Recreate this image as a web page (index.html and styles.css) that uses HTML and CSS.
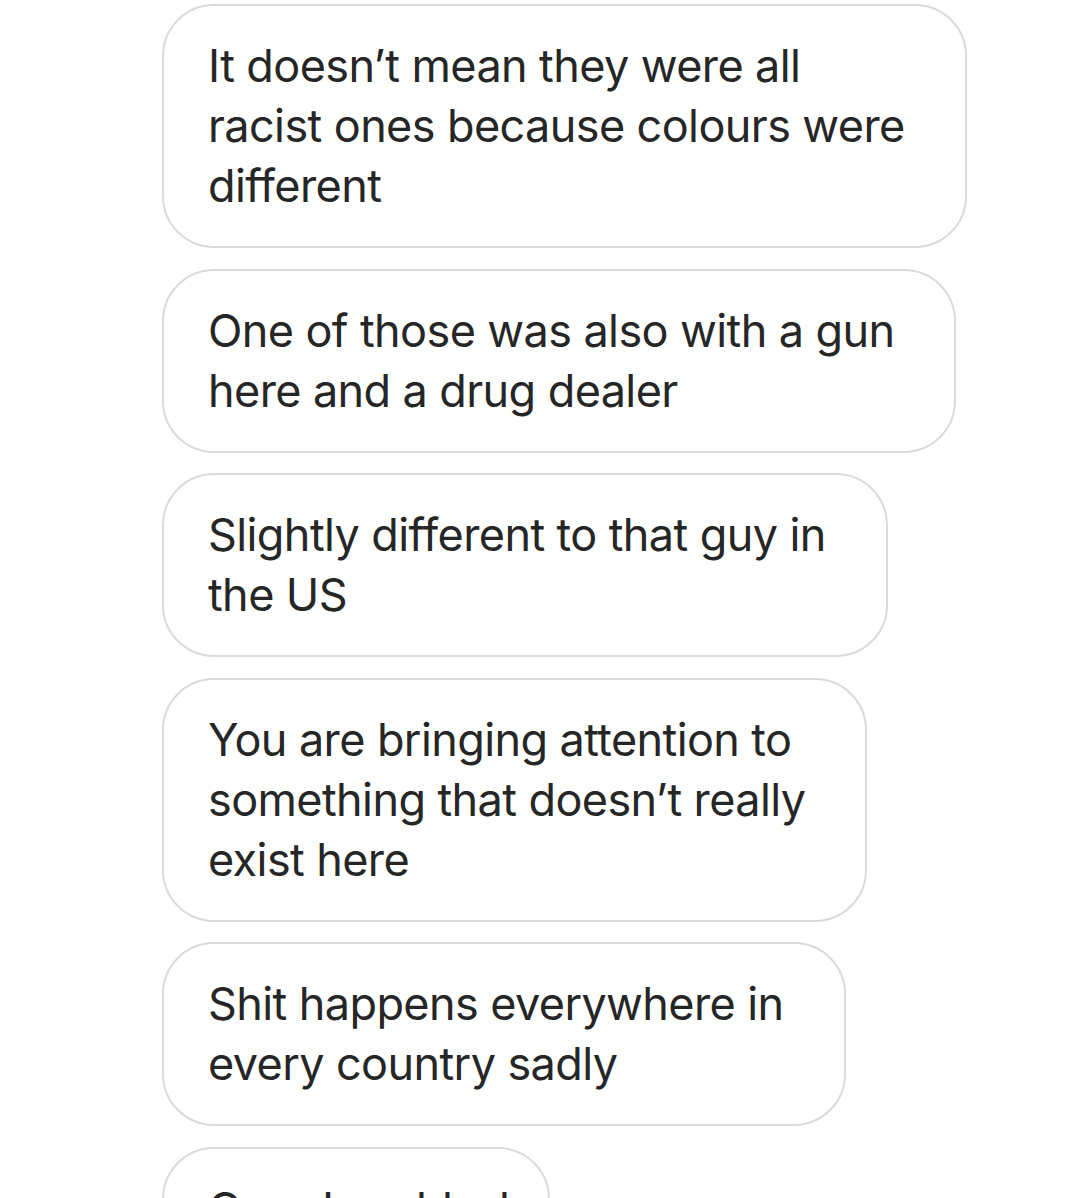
FILE: index.html
```html
<!DOCTYPE html>
<html>
<head>
<meta charset="utf-8">
<link rel="stylesheet" href="styles.css">
</head>
<body>
<div class="thread">
  <div class="bubble">It doesn’t mean they were all<br>racist ones because colours were<br>different</div>
  <div class="bubble">One of those was also with a gun<br>here and a drug dealer</div>
  <div class="bubble">Slightly different to that guy in<br>the US</div>
  <div class="bubble">You are bringing attention to<br>something that doesn’t really<br>exist here</div>
  <div class="bubble">Shit happens everywhere in<br>every country sadly</div>
  <div class="bubble bubble-single">Guys I am black</div>
</div>
</body>
</html>
```
FILE: styles.css
```css
html, body {
  margin: 0;
  padding: 0;
  background: #ffffff;
  height: 1198px;
  overflow: hidden;
}
.thread {
  display: flex;
  flex-direction: column;
  align-items: flex-start;
  gap: 20.6px;
  padding: 4px 0 0 162px;
}
.bubble {
  border: 2px solid #dadada;
  border-radius: 52px;
  padding: 30px 60px 30px 44px;
  font-family: Inter, "Liberation Sans", sans-serif;
  font-size: 45px;
  line-height: 60px;
  letter-spacing: -0.6px;
  color: #262626;
  white-space: nowrap;
}
.bubble-single {
  padding-right: 26px;
  letter-spacing: -1.6px;
}
```
